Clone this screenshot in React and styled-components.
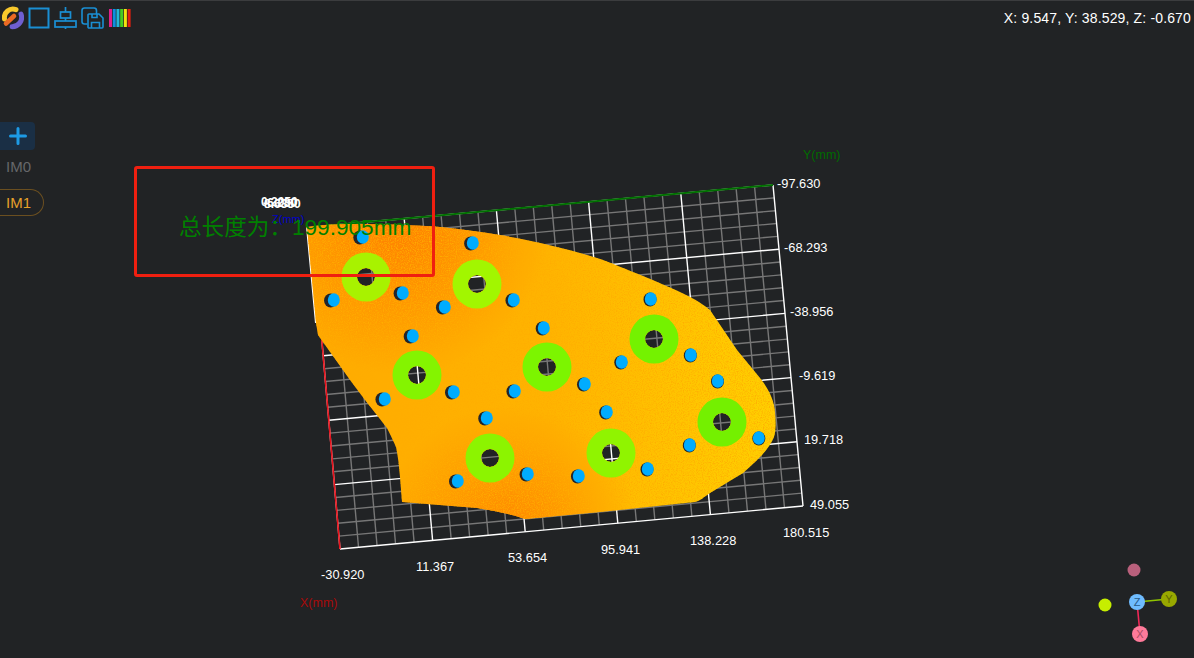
import React from "react";
import styled, { createGlobalStyle } from "styled-components";

const GlobalStyle = createGlobalStyle`
  html, body {
    margin: 0;
    padding: 0;
    height: 100%;
    background: #212325;
    overflow: hidden;
  }
`;

const Viewer = styled.div`
  position: relative;
  width: 1194px;
  height: 658px;
  box-sizing: border-box;
  border-top: 1px solid #3b3c3e;
  background: #212325;
  font-family: "Liberation Sans", "Noto Sans CJK SC", sans-serif;
  overflow: hidden;
`;

const Scene = styled.svg`
  position: absolute;
  left: 0;
  top: -1px;
  width: 1194px;
  height: 658px;
`;

const Overlay = styled.div`
  position: relative;
  display: flex;
  flex-direction: column;
  align-items: flex-start;
`;

const TopRow = styled.div`
  width: 100%;
  height: 33px;
  display: flex;
  align-items: center;
  justify-content: space-between;
  padding-right: 3px;
  box-sizing: border-box;
`;

const Toolbar = styled.div`
  display: flex;
  align-items: center;
  gap: 4px;
  padding-left: 2px;
`;

const Coords = styled.div`
  color: #fff;
  font-size: 14px;
  letter-spacing: 0.15px;
`;

const SideTabs = styled.div`
  display: flex;
  flex-direction: column;
  align-items: flex-start;
  margin-top: 88px;
`;

const AddButton = styled.div`
  width: 35px;
  height: 28px;
  background: #1a2f45;
  border-radius: 0 4px 4px 0;
  display: flex;
  align-items: center;
  justify-content: center;
`;

const Tab = styled.div`
  box-sizing: border-box;
  height: 27px;
  line-height: 25px;
  padding: 0 12px 0 6px;
  margin-top: ${({ $active }) => ($active ? "9px" : "3px")};
  font-size: 15px;
  color: ${({ $active }) => ($active ? "#e6a02a" : "#66676a")};
  border: 1px solid ${({ $active }) => ($active ? "#6b4f20" : "transparent")};
  border-left: none;
  border-radius: 0 14px 14px 0;
`;

const MeasureBox = styled.div`
  position: absolute;
  left: 134px;
  top: 165px;
  width: 301px;
  height: 111px;
  box-sizing: border-box;
  border: 3px solid #f01f10;
  border-radius: 3px;
`;

const MeasureText = styled.div`
  position: absolute;
  left: 179px;
  top: 213px;
  font-size: 22.6px;
  line-height: 28px;
  color: #008000;
  white-space: pre;
`;

const ZLabel = styled.div`
  position: absolute;
  left: 272px;
  top: 212px;
  font-size: 11px;
  color: #0000c8;
`;

const ZTick = styled.div`
  position: absolute;
  left: ${({ $x }) => $x}px;
  top: ${({ $y }) => $y}px;
  font-size: 12px;
  font-weight: 700;
  color: #fff;
`;

const TL = [312, 227];
const TR = [773, 185];
const BL = [340, 549];
const BR = [803, 506];

const at = (u, v) => {
  const x = (1 - v) * ((1 - u) * TL[0] + u * TR[0]) + v * ((1 - u) * BL[0] + u * BR[0]);
  const y = (1 - v) * ((1 - u) * TL[1] + u * TR[1]) + v * ((1 - u) * BL[1] + u * BR[1]);
  return [x, y];
};

const segment = (a, b) => ({ x1: a[0], y1: a[1], x2: b[0], y2: b[1] });

const gridLines = [];
for (let i = 0; i <= 25; i++) {
  const major = i % 5 === 0;
  gridLines.push({ key: "u" + i, major, ...segment(at(i / 25, 0), at(i / 25, 1)) });
  gridLines.push({ key: "v" + i, major, ...segment(at(0, i / 25), at(1, i / 25)) });
}

const circlePath = (cx, cy, r) =>
  `M${cx - r} ${cy}a${r} ${r} 0 1 0 ${r * 2} 0a${r} ${r} 0 1 0 ${-r * 2} 0Z`;

const rings = [
  [366, 277, "#a8f200"],
  [477, 284, "#a2f600"],
  [417, 375, "#84f400"],
  [547, 367, "#7cf500"],
  [654, 339, "#74f200"],
  [722, 422, "#74f000"],
  [490, 458, "#8cf400"],
  [611, 453, "#90f400"],
];

const dots = [
  [362, 237], [472, 243], [333, 300], [402, 293], [444, 307], [513, 300],
  [412, 336], [543, 328], [650, 299], [690, 355], [621, 362], [453, 392],
  [384, 399], [514, 391], [584, 384], [717, 381], [486, 418], [606, 412],
  [689, 445], [758, 438], [647, 469], [527, 474], [578, 476], [457, 481],
];

const outline =
  "M307 227 C320 225 335 224 350 224 C385 224 415 225 440 227 C462 229 482 232 500 235 " +
  "C535 241 568 249 597 258 C612 263 623 268 633 272 C655 281 675 289 690 297 " +
  "C698 301 704 305 710 310 L737 350 L760 378 C768 388 775 402 775 413 " +
  "C776 422 776 430 774 437 C771 444 766 451 760 457 " +
  "C755 462 749 468 743 473 L710 493 C704 497 700 501 695 502 L600 512 L525 519 " +
  "C510 514 495 511 477 508 L402 502 L400 477 C399 466 398 456 396 447 " +
  "C393 440 390 434 387 428 L365 400 L350 380 L318 335 L316 323 Z";

const partPath = outline + rings.map(([x, y]) => circlePath(x, y, 9)).join("");

const rightTicks = [
  ["-97.630", 777, 188],
  ["-68.293", 784, 252],
  ["-38.956", 790, 316],
  ["-9.619", 799, 380],
  ["19.718", 804, 444],
  ["49.055", 810, 509],
];

const bottomTicks = [
  ["-30.920", 321, 579],
  ["11.367", 416, 571],
  ["53.654", 508, 562],
  ["95.941", 601, 554],
  ["138.228", 690, 545],
  ["180.515", 783, 537],
];

const ICON = "#1a8fd4";

const Logo = () => (
  <svg width="22" height="24" viewBox="0 0 22 24" fill="none">
    <path d="M2.5 13A8.5 8.5 0 0 1 14 3.7" stroke="#f8c82c" strokeWidth="5" strokeLinecap="round" />
    <path d="M19 8A9.5 9.5 0 0 1 10 20.8" stroke="#6f5fd0" strokeWidth="5" strokeLinecap="round" />
    <path d="M4 17.5L12 10" stroke="#ec6a24" strokeWidth="4.6" strokeLinecap="round" />
  </svg>
);

const SquareIcon = () => (
  <svg width="22" height="22" viewBox="0 0 22 22" fill="none">
    <rect x="1.5" y="1.5" width="19" height="19" stroke={ICON} strokeWidth="2" />
  </svg>
);

const AlignIcon = () => (
  <svg width="23" height="22" viewBox="0 0 23 22" fill="none" stroke={ICON} strokeWidth="1.7">
    <path d="M11.5 0V5M11.5 11V14M11.5 20V22" />
    <rect x="6.5" y="5" width="10" height="6" />
    <rect x="1" y="14" width="21" height="6" />
  </svg>
);

const CopyIcon = () => (
  <svg width="23" height="22" viewBox="0 0 23 22" fill="none" stroke={ICON} strokeWidth="1.6">
    <path d="M6.5 17H3.5C2 17 1 16 1 14.5V3.5C1 2 2 1 3.5 1H13C14.5 1 15.5 2 15.5 3.5V7" />
    <path d="M8 7H18L22 11V20C22 20.6 21.6 21 21 21H8C7.4 21 7 20.6 7 20V8C7 7.4 7.4 7 8 7Z" />
    <path d="M10.5 21V15.5H18.5V21M11 7V10.5H16V7" />
  </svg>
);

const barColors = ["#e0208a", "#0f8fe0", "#22b8d8", "#45cc22", "#f2e210", "#e0200f"];

const ColorBars = () => (
  <svg width="23" height="18" viewBox="0 0 23 18">
    {barColors.map((color, i) => (
      <rect key={color} x={1 + i * 3.72} y="0" width="3" height="18" fill={color} />
    ))}
  </svg>
);

const PlusIcon = () => (
  <svg width="18" height="18" viewBox="0 0 18 18">
    <path d="M9 1.5V16.5M1.5 9H16.5" stroke="#1d9be6" strokeWidth="3" strokeLinecap="round" />
  </svg>
);

const GizmoBall = ({ x, y, r = 8, fill, label, color }) => (
  <g>
    <circle cx={x} cy={y} r={r} fill={fill} />
    {label && (
      <text x={x} y={y + 4} textAnchor="middle" fontSize="11" fill={color}>
        {label}
      </text>
    )}
  </g>
);

const App = () => {
  return (
    <Viewer>
      <GlobalStyle />
      <Scene viewBox="0 0 1194 658" fontFamily="Liberation Sans, sans-serif">
        <defs>
          <linearGradient id="base" gradientUnits="userSpaceOnUse" x1="330" y1="400" x2="770" y2="400">
            <stop offset="0" stopColor="#ffab00" />
            <stop offset="0.5" stopColor="#ffb400" />
            <stop offset="1" stopColor="#ffd000" />
          </linearGradient>
          <radialGradient id="hotTop" gradientUnits="userSpaceOnUse" cx="400" cy="225" r="150">
            <stop offset="0" stopColor="#ff7a00" stopOpacity="0.9" />
            <stop offset="1" stopColor="#ff7a00" stopOpacity="0" />
          </radialGradient>
          <radialGradient id="hotBottom" gradientUnits="userSpaceOnUse" cx="510" cy="535" r="130">
            <stop offset="0" stopColor="#ff7a00" stopOpacity="0.8" />
            <stop offset="1" stopColor="#ff7a00" stopOpacity="0" />
          </radialGradient>
          <filter id="speck" x="0" y="0" width="100%" height="100%">
            <feTurbulence type="fractalNoise" baseFrequency="0.85" numOctaves="2" seed="4" result="noise" />
            <feColorMatrix
              in="noise"
              type="matrix"
              values="0 0 0 0 1  0 0 0 0 0.42  0 0 0 0 0  0 0 0 2.4 -1"
              result="tint"
            />
            <feComposite in="tint" in2="SourceGraphic" operator="in" result="clipped" />
            <feMerge>
              <feMergeNode in="SourceGraphic" />
              <feMergeNode in="clipped" />
            </feMerge>
          </filter>
        </defs>

        {gridLines
          .filter((l) => !l.major)
          .map(({ key, major, ...l }) => (
            <line key={key} {...l} stroke="#777777" strokeWidth="1.4" />
          ))}
        {gridLines
          .filter((l) => l.major)
          .map(({ key, major, ...l }) => (
            <line key={key} {...l} stroke="#ffffff" strokeWidth="1.4" />
          ))}
        <line {...segment(TL, TR)} stroke="#007000" strokeWidth="2" />
        <line {...segment(BL, TL)} stroke="#e8101a" strokeWidth="1.6" />
        <line x1="307" y1="227" x2="316" y2="323" stroke="#fff" strokeWidth="2" />

        <g filter="url(#speck)">
          <path d={partPath} fillRule="evenodd" fill="url(#base)" />
          <path d={partPath} fillRule="evenodd" fill="url(#hotTop)" />
          <path d={partPath} fillRule="evenodd" fill="url(#hotBottom)" />
        </g>

        {rings.map(([x, y, color]) => (
          <path
            key={x}
            d={circlePath(x, y, 24.5) + circlePath(x, y, 9)}
            fillRule="evenodd"
            fill={color}
          />
        ))}

        {dots.map(([x, y]) => {
          const shift = (x - 650) / 130;
          return (
            <g key={x + "-" + y}>
              <ellipse cx={x + shift} cy={y + 0.5} rx="6.5" ry="7" fill="#23242a" />
              <ellipse cx={x + 0.8} cy={y} rx="6" ry="6.8" fill="#00acff" />
            </g>
          );
        })}

        <g fill="#fff" fontSize="12.8">
          {rightTicks.concat(bottomTicks).map(([label, x, y]) => (
            <text key={label} x={x} y={y}>
              {label}
            </text>
          ))}
        </g>
        <text x="803" y="159" fontSize="12.5" fill="#006b00">Y(mm)</text>
        <text x="300" y="607" fontSize="12.5" fill="#a80a0a">X(mm)</text>

        <line x1="1137" y1="602" x2="1169" y2="599" stroke="#8fc400" strokeWidth="1.6" />
        <line x1="1137" y1="602" x2="1140" y2="634" stroke="#f02858" strokeWidth="1.6" />
        <GizmoBall x={1134} y={570} r={6.5} fill="#b9607c" />
        <GizmoBall x={1105} y={605} r={6.5} fill="#c6ee00" />
        <GizmoBall x={1137} y={602} fill="#6fbcff" label="Z" color="#2a5a88" />
        <GizmoBall x={1169} y={599} fill="#98a800" label="Y" color="#5c6600" />
        <GizmoBall x={1140} y={634} fill="#ff7a9a" label="X" color="#a84a62" />
      </Scene>

      <Overlay>
        <TopRow>
          <Toolbar>
            <Logo />
            <SquareIcon />
            <AlignIcon />
            <CopyIcon />
            <ColorBars />
          </Toolbar>
          <Coords>X: 9.547, Y: 38.529, Z: -0.670</Coords>
        </TopRow>
        <SideTabs>
          <AddButton>
            <PlusIcon />
          </AddButton>
          <Tab>IM0</Tab>
          <Tab $active>IM1</Tab>
        </SideTabs>
      </Overlay>

      <ZTick $x={261} $y={194}>0.2050</ZTick>
      <ZTick $x={263} $y={195}>-6.230</ZTick>
      <ZTick $x={264} $y={196}>8.6350</ZTick>
      <ZLabel>Z(mm)</ZLabel>
      <MeasureText>总长度为：199.905mm</MeasureText>
      <MeasureBox />
    </Viewer>
  );
};

export default App;
